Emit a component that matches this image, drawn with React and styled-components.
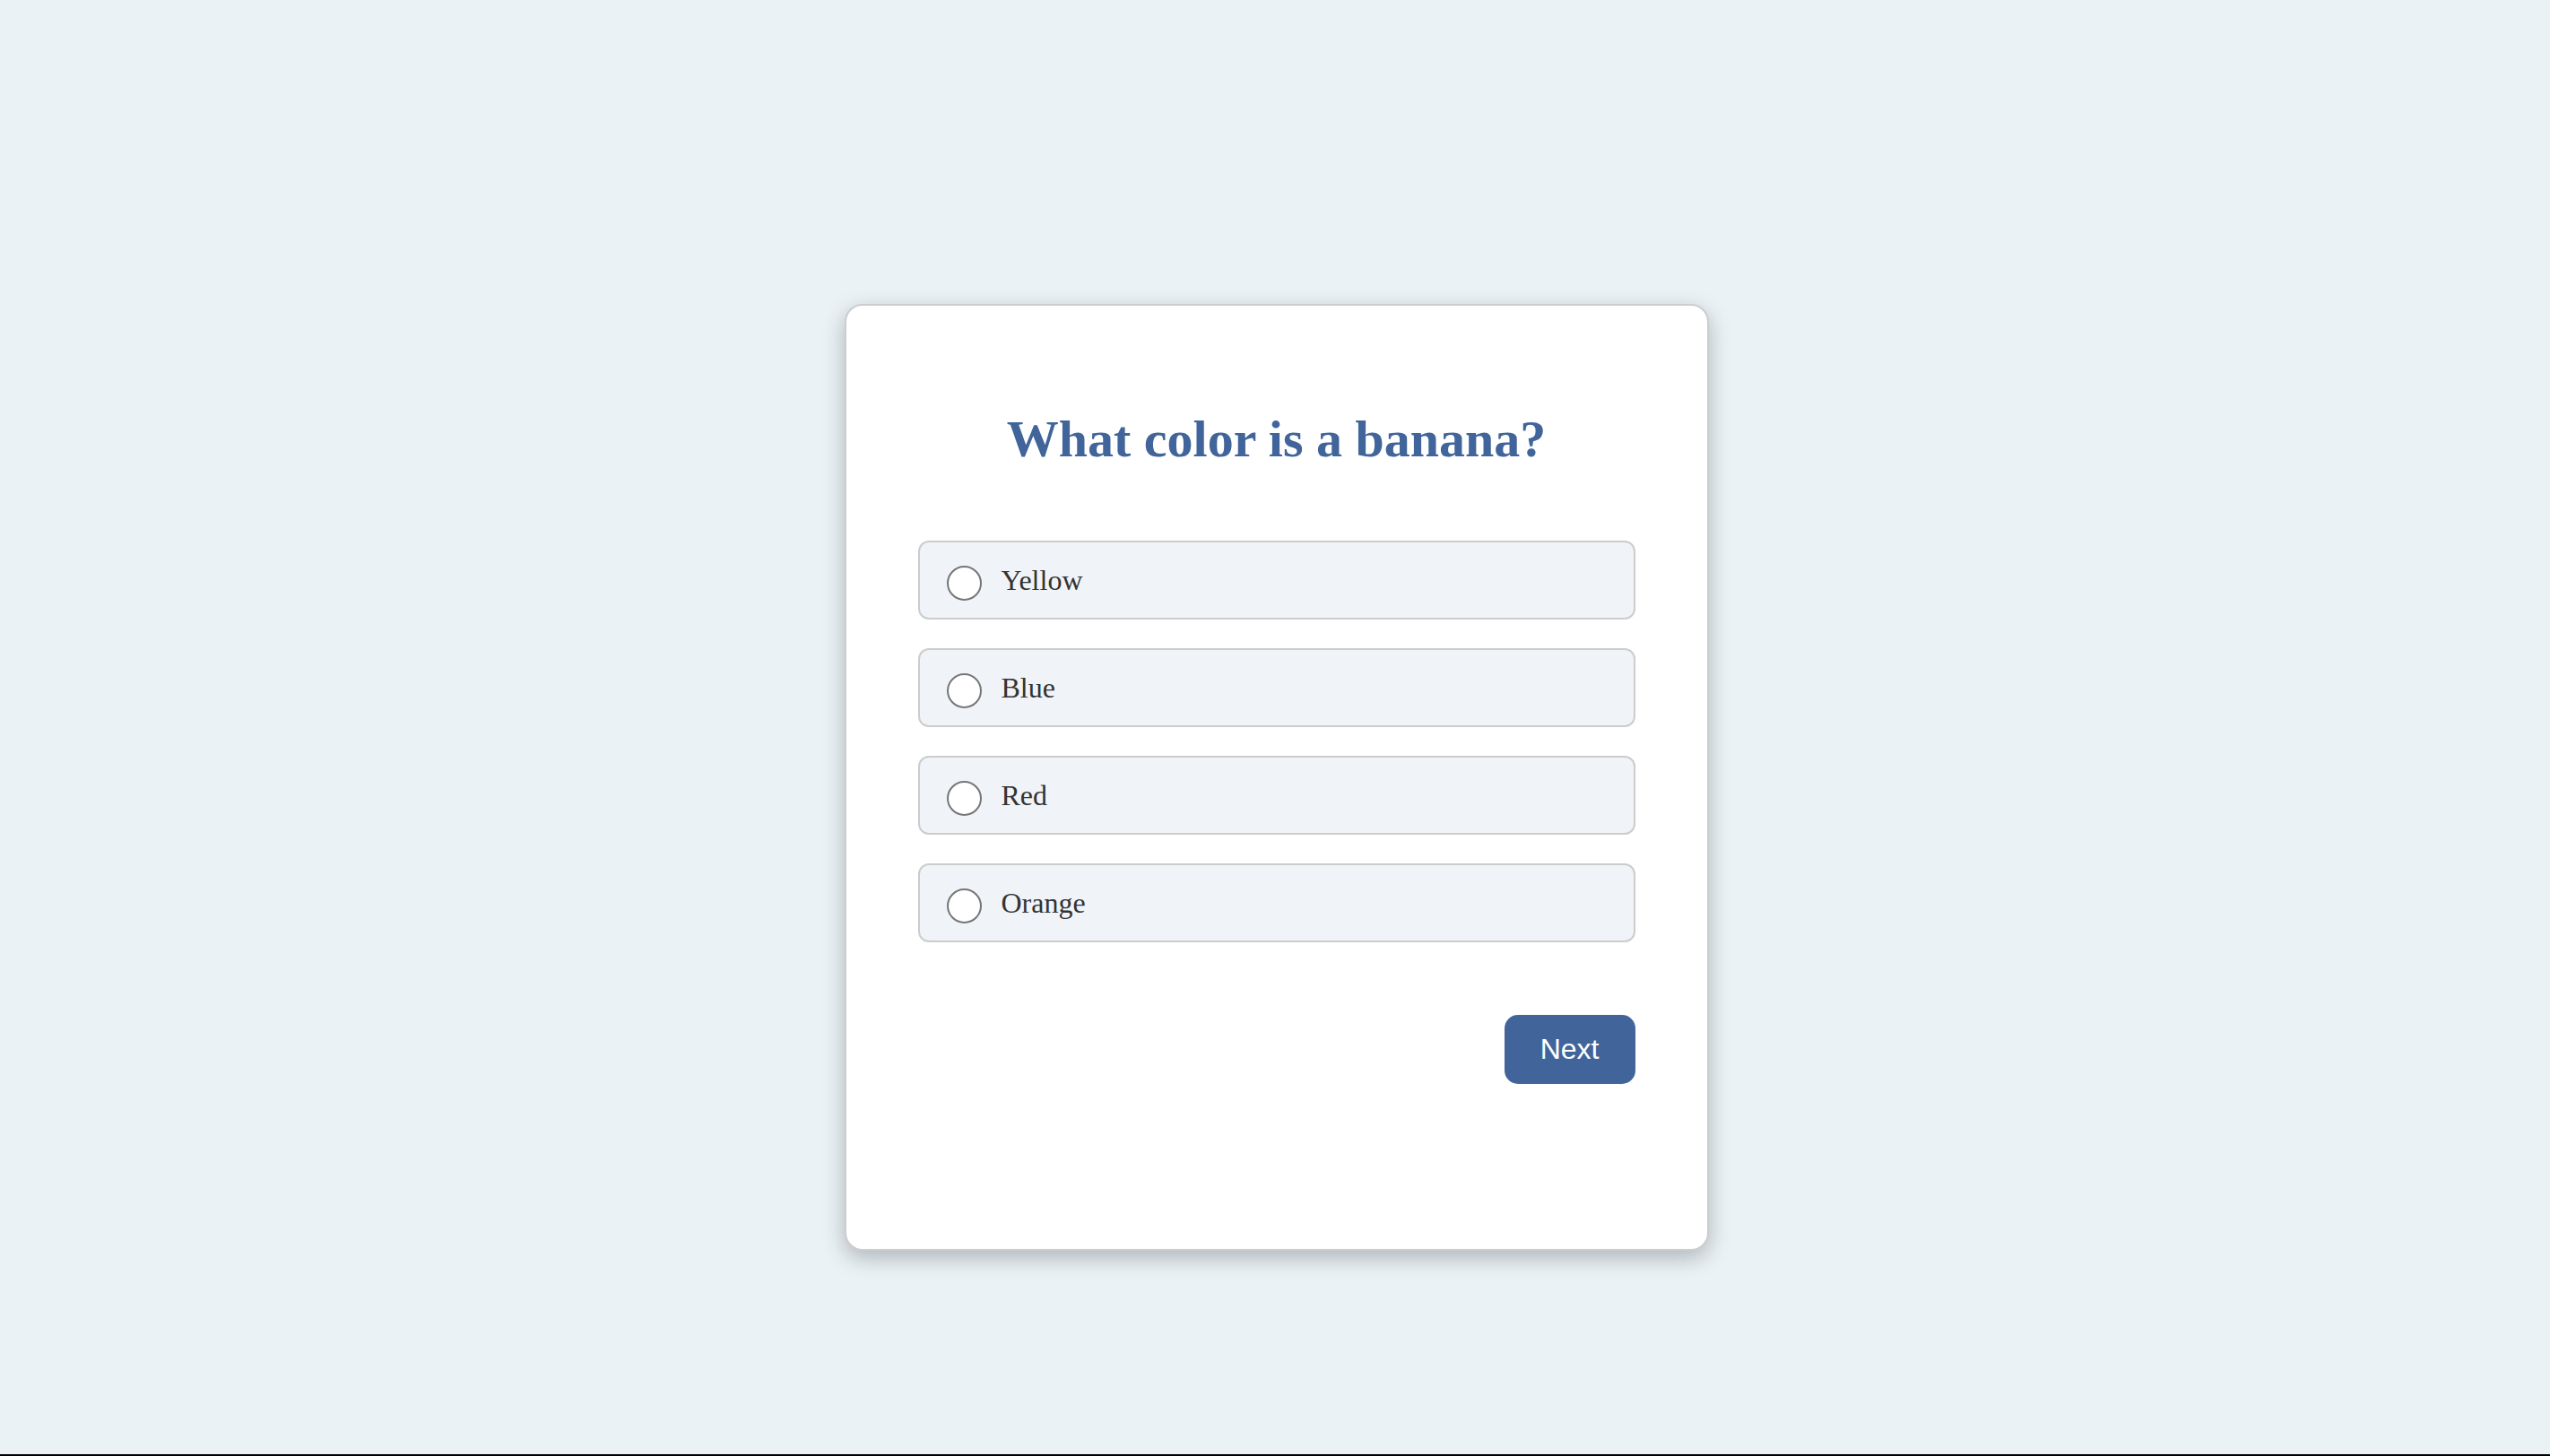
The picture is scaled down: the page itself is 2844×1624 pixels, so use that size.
import React, { useState } from 'react';
import styled, { createGlobalStyle } from 'styled-components';

const GlobalStyle = createGlobalStyle`
    html {
        background: #000000;
    }
    body {
        margin: 0;
        min-height: 1622px;
        background: #eaf2f6;
        font-family: "Liberation Serif", "Times New Roman", serif;
    }
`

const options = ['Yellow', 'Blue', 'Red', 'Orange'];

const App = () => {
    const [selected, setSelected] = useState(null);

    return (
        <>
            <GlobalStyle />
            <Page>
                <Card>
                    <Question>What color is a banana?</Question>
                    <OptionList>
                        {options.map((option) => (
                            <Option key={option}>
                                <Radio
                                    type="radio"
                                    name="answer"
                                    checked={selected === option}
                                    onChange={() => setSelected(option)}
                                />
                                <OptionText>{option}</OptionText>
                            </Option>
                        ))}
                    </OptionList>
                    <Actions>
                        <NextButton>Next</NextButton>
                    </Actions>
                </Card>
            </Page>
        </>
    );
}

export default App;

const Page = styled.div`
    display: flex;
    justify-content: center;
    padding: 339px 0 0 3px;
`
const Card = styled.div`
    box-sizing: border-box;
    width: 964px;
    min-height: 1056px;
    padding: 80px;
    background: #ffffff;
    border: 2px solid #cdcdcd;
    border-radius: 20px;
    box-shadow: 0 8px 24px rgba(0, 0, 0, 0.25);
`
const Question = styled.h1`
    margin: 35px 0 80px;
    text-align: center;
    font-size: 58px;
    font-weight: bold;
    color: #41659a;
`
const OptionList = styled.div`
    display: flex;
    flex-direction: column;
    gap: 32px;
`
const Option = styled.label`
    box-sizing: border-box;
    height: 88px;
    display: flex;
    align-items: center;
    gap: 22px;
    padding: 0 30px;
    background: #f0f4f8;
    border: 2px solid #cccccc;
    border-radius: 12px;
    cursor: pointer;
`
const Radio = styled.input`
    appearance: none;
    margin: 6px 0 0;
    width: 39px;
    height: 39px;
    box-sizing: border-box;
    border: 2px solid #767676;
    border-radius: 50%;
    background: #ffffff;
    cursor: pointer;

    &:checked {
        border-color: #41659a;
        background: radial-gradient(circle, #41659a 0 9px, #ffffff 10px);
    }
`
const OptionText = styled.span`
    font-size: 32px;
    color: #333333;
`
const Actions = styled.div`
    display: flex;
    justify-content: flex-end;
    margin-top: 81px;
`
const NextButton = styled.button`
    height: 77px;
    padding: 0 40px;
    background: #41659a;
    color: #ffffff;
    border: none;
    border-radius: 15px;
    font-family: "Liberation Sans", Arial, sans-serif;
    font-size: 32px;
    cursor: pointer;
`
